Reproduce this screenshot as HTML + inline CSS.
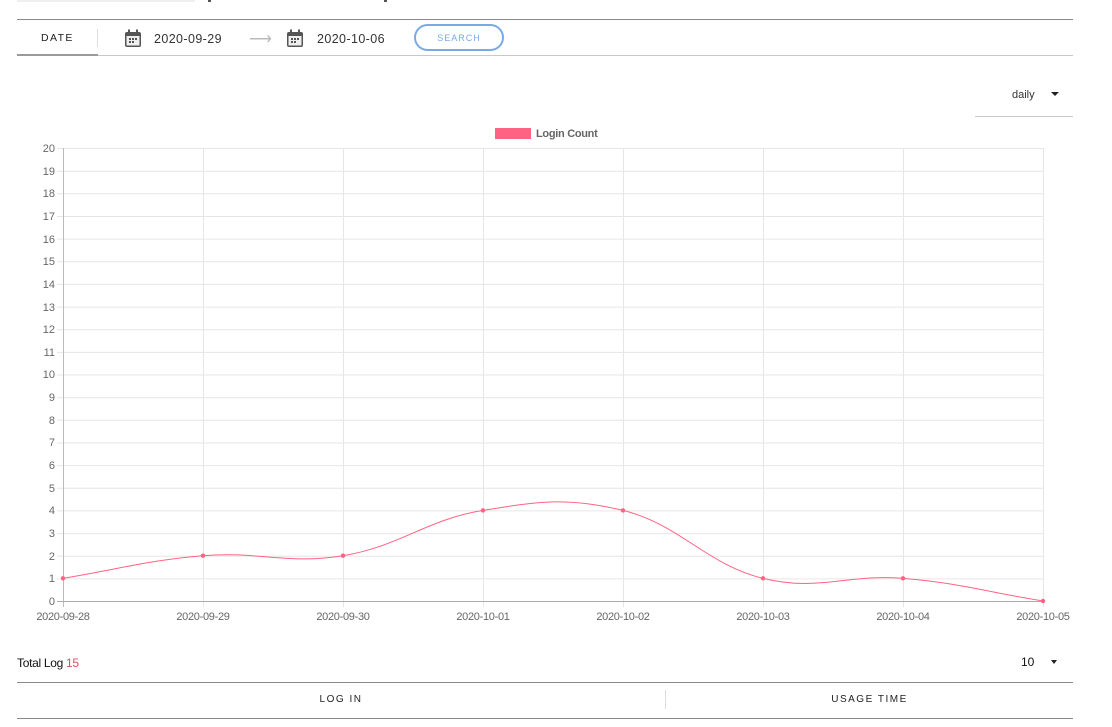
<!DOCTYPE html>
<html><head><meta charset="utf-8"><style>
body{margin:0;width:1112px;height:727px;background:#fff;font-family:"Liberation Sans",sans-serif;position:relative;overflow:hidden}
.a{position:absolute}
</style></head><body>
<div class="a" style="left:17px;top:0;width:178px;height:2px;background:#efefef"></div>
<div class="a" style="left:208px;top:0;width:3px;height:2px;background:#555"></div>
<div class="a" style="left:384px;top:0;width:3px;height:2px;background:#555"></div>
<div class="a" style="left:17px;top:19px;width:1056px;height:1px;background:#8a8a8a"></div>
<div class="a" style="left:17px;top:55px;width:1056px;height:1px;background:#c8c8c8"></div>
<div class="a" style="left:17px;top:54px;width:81px;height:2px;background:#9a9a9a"></div>
<div class="a" style="left:41px;top:32px;font-size:10.5px;letter-spacing:1.4px;color:#222">DATE</div>
<div class="a" style="left:97px;top:29px;width:1px;height:18px;background:#ddd"></div>
<svg class="a" style="left:124px;top:29px" width="18" height="19" viewBox="0 0 18 19"><rect x="1" y="3" width="16" height="15" rx="2" fill="#555"/><rect x="4" y="0.5" width="2" height="4" fill="#555"/><rect x="12" y="0.5" width="2" height="4" fill="#555"/><rect x="2.5" y="7" width="13" height="9.5" fill="#eee"/><g fill="#555"><rect x="5" y="9" width="2" height="2"/><rect x="8" y="9" width="2" height="2"/><rect x="11" y="9" width="2" height="2"/><rect x="5" y="12" width="2" height="2"/><rect x="8" y="12" width="2" height="2"/></g></svg>
<div class="a" style="left:154px;top:32px;font-size:12.5px;color:#333;letter-spacing:0.4px">2020-09-29</div>
<div class="a" style="left:249px;top:29px;font-size:16px;color:#bbb">⟶</div>
<svg class="a" style="left:286px;top:29px" width="18" height="19" viewBox="0 0 18 19"><rect x="1" y="3" width="16" height="15" rx="2" fill="#555"/><rect x="4" y="0.5" width="2" height="4" fill="#555"/><rect x="12" y="0.5" width="2" height="4" fill="#555"/><rect x="2.5" y="7" width="13" height="9.5" fill="#eee"/><g fill="#555"><rect x="5" y="9" width="2" height="2"/><rect x="8" y="9" width="2" height="2"/><rect x="11" y="9" width="2" height="2"/><rect x="5" y="12" width="2" height="2"/><rect x="8" y="12" width="2" height="2"/></g></svg>
<div class="a" style="left:317px;top:32px;font-size:12.5px;color:#333;letter-spacing:0.4px">2020-10-06</div>
<div class="a" style="left:414px;top:24px;width:86px;height:23px;border:2px solid #7aaae6;border-radius:14px;text-align:center;line-height:24px;font-size:9px;letter-spacing:1px;color:#7aaae6">SEARCH</div>
<div class="a" style="left:1012px;top:89px;font-size:11px;color:#333">daily</div>
<div class="a" style="left:1051px;top:92px;width:0;height:0;border-left:4px solid transparent;border-right:4px solid transparent;border-top:4px solid #222"></div>
<div class="a" style="left:975px;top:116px;width:98px;height:1px;background:#c8c8c8"></div>
<svg class="a" style="left:0;top:0" width="1112" height="727">
<rect x="495" y="128" width="36" height="11" fill="#ff6384"/>
<text x="536" y="137" font-size="11" font-weight="bold" fill="#666" font-family="Liberation Sans" letter-spacing="-0.3">Login Count</text>
<g stroke="#e6e6e6" stroke-width="1">
<line x1="57" x2="1043" y1="148.5" y2="148.5"/><line x1="57" x2="1043" y1="171.2" y2="171.2"/><line x1="57" x2="1043" y1="193.8" y2="193.8"/><line x1="57" x2="1043" y1="216.5" y2="216.5"/><line x1="57" x2="1043" y1="239.1" y2="239.1"/><line x1="57" x2="1043" y1="261.8" y2="261.8"/><line x1="57" x2="1043" y1="284.4" y2="284.4"/><line x1="57" x2="1043" y1="307.1" y2="307.1"/><line x1="57" x2="1043" y1="329.7" y2="329.7"/><line x1="57" x2="1043" y1="352.4" y2="352.4"/><line x1="57" x2="1043" y1="375" y2="375"/><line x1="57" x2="1043" y1="397.7" y2="397.7"/><line x1="57" x2="1043" y1="420.3" y2="420.3"/><line x1="57" x2="1043" y1="443" y2="443"/><line x1="57" x2="1043" y1="465.6" y2="465.6"/><line x1="57" x2="1043" y1="488.3" y2="488.3"/><line x1="57" x2="1043" y1="510.9" y2="510.9"/><line x1="57" x2="1043" y1="533.6" y2="533.6"/><line x1="57" x2="1043" y1="556.2" y2="556.2"/><line x1="57" x2="1043" y1="578.9" y2="578.9"/>
<line x1="203.5" x2="203.5" y1="148" y2="607"/><line x1="343.5" x2="343.5" y1="148" y2="607"/><line x1="483.5" x2="483.5" y1="148" y2="607"/><line x1="623.5" x2="623.5" y1="148" y2="607"/><line x1="763.5" x2="763.5" y1="148" y2="607"/><line x1="903.5" x2="903.5" y1="148" y2="607"/><line x1="1043.5" x2="1043.5" y1="148" y2="607"/>
</g>
<line x1="63.5" x2="63.5" y1="148" y2="607" stroke="#bbb"/>
<line x1="57" x2="1043" y1="601.5" y2="601.5" stroke="#aaa"/>
<g font-size="11" fill="#666" text-anchor="end" font-family="Liberation Sans">
<text x="55" y="152">20</text><text x="55" y="175">19</text><text x="55" y="197">18</text><text x="55" y="220">17</text><text x="55" y="243">16</text><text x="55" y="265">15</text><text x="55" y="288">14</text><text x="55" y="311">13</text><text x="55" y="333">12</text><text x="55" y="356">11</text><text x="55" y="378">10</text><text x="55" y="401">9</text><text x="55" y="424">8</text><text x="55" y="446">7</text><text x="55" y="469">6</text><text x="55" y="492">5</text><text x="55" y="514">4</text><text x="55" y="537">3</text><text x="55" y="560">2</text><text x="55" y="582">1</text><text x="55" y="605">0</text>
</g>
<g font-size="11" fill="#666" text-anchor="middle" font-family="Liberation Sans" letter-spacing="-0.3">
<text x="63" y="620">2020-09-28</text><text x="203" y="620">2020-09-29</text><text x="343" y="620">2020-09-30</text><text x="483" y="620">2020-10-01</text><text x="623" y="620">2020-10-02</text><text x="763" y="620">2020-10-03</text><text x="903" y="620">2020-10-04</text><text x="1043" y="620">2020-10-05</text>
</g>
<path d="M63,578.35 C119,569.3 147,560.23 203,555.7 C259,551.17 287,564.76 343,555.7 C399,546.64 427,519.46 483,510.4 C539,501.34 567,496.81 623,510.4 C679,523.99 707,564.76 763,578.35 C819,591.94 847,573.82 903,578.35 C959,582.88 987,591.94 1043,601" fill="none" stroke="#ff6384" stroke-width="1"/>
<g fill="#ff6384"><circle cx="63" cy="578.35" r="2.2"/><circle cx="203" cy="555.7" r="2.2"/><circle cx="343" cy="555.7" r="2.2"/><circle cx="483" cy="510.4" r="2.2"/><circle cx="623" cy="510.4" r="2.2"/><circle cx="763" cy="578.35" r="2.2"/><circle cx="903" cy="578.35" r="2.2"/><circle cx="1043" cy="601" r="2.2"/></g>
</svg>
<div class="a" style="left:17px;top:656px;font-size:12px;color:#111;letter-spacing:-0.3px">Total Log <span style="color:#e84a5f">15</span></div>
<div class="a" style="left:1021px;top:655px;font-size:12px;color:#111">10</div>
<div class="a" style="left:1051px;top:660px;width:0;height:0;border-left:3.5px solid transparent;border-right:3.5px solid transparent;border-top:4px solid #222"></div>
<div class="a" style="left:17px;top:682px;width:1056px;height:1px;background:#8a8a8a"></div>
<div class="a" style="left:17px;top:718px;width:1056px;height:1px;background:#8a8a8a"></div>
<div class="a" style="left:665px;top:690px;width:1px;height:19px;background:#ddd"></div>
<div class="a" style="left:17px;top:694px;width:648px;text-align:center;font-size:10px;letter-spacing:1.5px;color:#222">LOG IN</div>
<div class="a" style="left:666px;top:694px;width:407px;text-align:center;font-size:10px;letter-spacing:1.5px;color:#222">USAGE TIME</div>
</body></html>
